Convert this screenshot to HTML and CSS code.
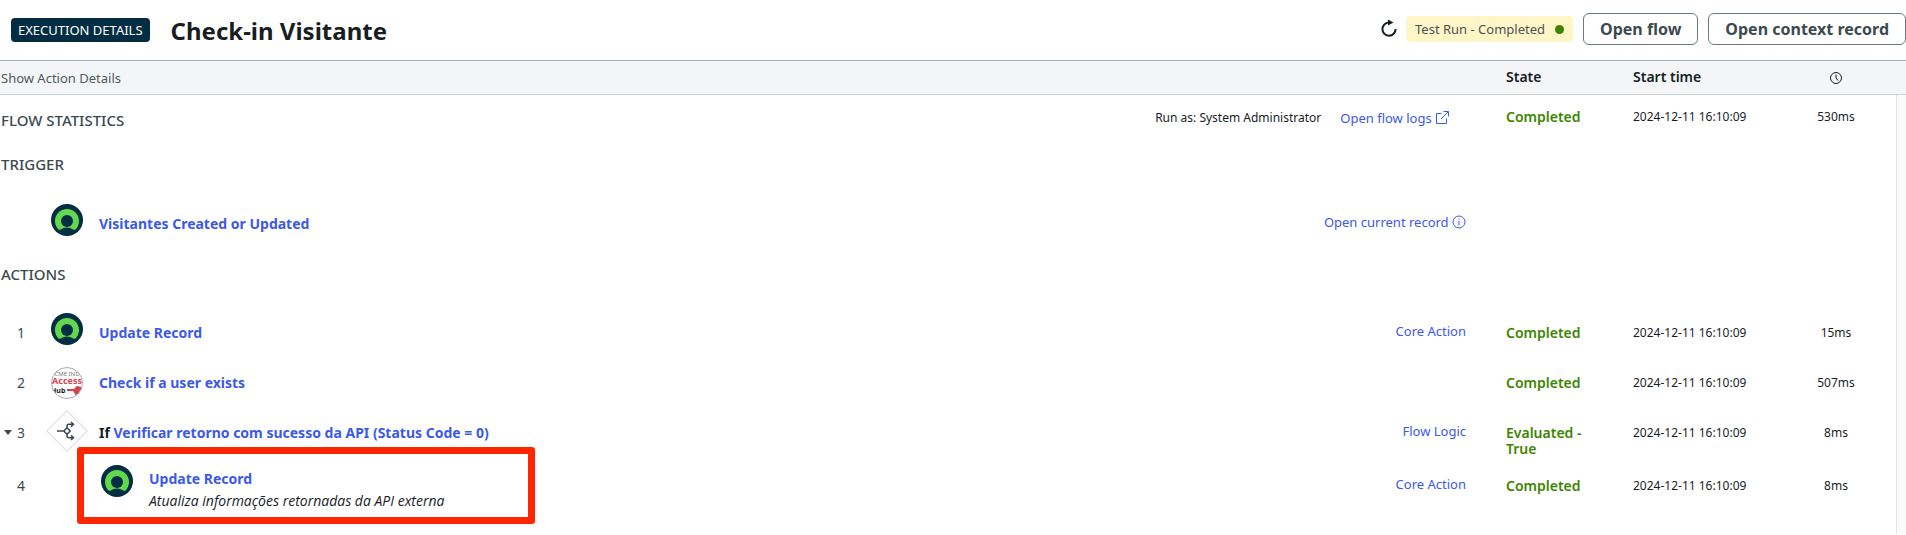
FILE: index.html
```html
<!DOCTYPE html>
<html lang="pt">
<head>
<meta charset="utf-8">
<title>Check-in Visitante</title>
<link rel="stylesheet" href="styles.css">
</head>
<body>
<svg width="0" height="0" class="defs" aria-hidden="true">
  <symbol id="record" viewBox="0 0 32 32">
    <circle cx="16" cy="16" r="16" fill="#032d42"/>
    <path d="M16 5C9.300 5 4 10.300 4 17c0 3.200 1.200 6 3.200 8.200.7.700 1.800.800 2.600.300C11.600 24.200 13.800 23.500 16 23.500s4.400.700 6.200 2c.8.500 1.900.400 2.600-.300C26.800 23 28 20.200 28 17 28 10.300 22.700 5 16 5z" fill="#62d84e"/>
    <circle cx="16" cy="17" r="6" fill="#032d42"/>
  </symbol>
</svg>
<header class="topbar">
  <span class="tag">EXECUTION DETAILS</span>
  <h1 class="title">Check-in Visitante</h1>
  <div class="tools">
    <button class="refresh" aria-label="Refresh">
      <svg width="18" height="20" viewBox="0 0 18 20"><path d="M9.500 3.500A6.600 6.600 0 1 0 15.600 10" fill="none" stroke="#181d1f" stroke-width="2"/><path d="M8 .500l5.500 3L8 6.500z" fill="#181d1f"/></svg>
    </button>
    <span class="status">Test Run - Completed <i class="dot"></i></span>
    <button class="btn">Open flow</button>
    <button class="btn">Open context record</button>
  </div>
</header>
<table class="log">
  <colgroup>
    <col class="c-num"><col><col class="c-link"><col class="c-state"><col class="c-start"><col class="c-time"><col class="c-gutter">
  </colgroup>
  <thead>
    <tr>
      <th class="toggle" colspan="3">Show Action Details</th>
      <th>State</th>
      <th>Start time</th>
      <th class="time"><svg width="14" height="14" viewBox="0 0 14 14" fill="none" stroke="#181d1f" role="img" aria-label="Duration"><circle cx="7" cy="7" r="5.500"/><path d="M7 3.500V7l2 2.500"/></svg></th>
      <th></th>
    </tr>
  </thead>
  <tbody>
    <tr class="stats">
      <td class="section" colspan="2">FLOW STATISTICS</td>
      <td class="link"><div class="run"><span class="runas">Run as: System Administrator</span>
        <a href="#">Open flow logs <svg width="14" height="14" viewBox="0 0 14 14" fill="none" stroke="currentColor"><path d="M6.500 2.500h-5v10h10v-5M6 8l7-7M8.500.500h5v5"/></svg></a></div></td>
      <td class="state">Completed</td><td>2024-12-11 16:10:09</td><td class="time">530ms</td><td class="gutter"></td>
    </tr>
    <tr class="heading"><td class="section" colspan="6">TRIGGER</td><td class="gutter"></td></tr>
    <tr class="trigger">
      <td></td>
      <td><div class="name"><svg class="icon"><use href="#record"/></svg><a class="strong" href="#">Visitantes Created or Updated</a></div></td>
      <td class="link"><a href="#">Open current record <svg width="14" height="14" viewBox="0 0 14 14" fill="none" stroke="currentColor"><circle cx="7" cy="7" r="6"/><path d="M7 6v4.500M7 3.500v1.200"/></svg></a></td>
      <td></td><td></td><td></td><td class="gutter"></td>
    </tr>
    <tr class="heading"><td class="section" colspan="6">ACTIONS</td><td class="gutter"></td></tr>
    <tr class="first">
      <td class="num">1</td>
      <td><div class="name"><svg class="icon"><use href="#record"/></svg><a class="strong" href="#">Update Record</a></div></td>
      <td class="link"><a href="#">Core Action</a></td>
      <td class="state">Completed</td><td>2024-12-11 16:10:09</td><td class="time">15ms</td><td class="gutter"></td>
    </tr>
    <tr class="action">
      <td class="num">2</td>
      <td><div class="name">
        <svg class="logo" viewBox="0 0 32 32">
          <clipPath id="disc"><circle cx="16" cy="16" r="15.500"/></clipPath>
          <circle cx="16" cy="16" r="15.500" fill="#fff"/>
          <g clip-path="url(#disc)">
            <text class="logo-top" x="16" y="9" text-anchor="middle">CME IND</text>
            <text class="logo-red" x="16" y="17" text-anchor="middle">Access</text>
            <text class="logo-dark" x="0" y="26">Hub</text>
            <path d="M16 23h8M26 20l4 1v5l-5 1-2-3.500z" stroke="#d9434e" stroke-width="2" fill="#d9434e"/>
          </g>
          <circle cx="16" cy="16" r="15.500" fill="none" stroke="#a4abb0"/>
        </svg>
        <a class="strong" href="#">Check if a user exists</a></div></td>
      <td></td>
      <td class="state">Completed</td><td>2024-12-11 16:10:09</td><td class="time">507ms</td><td class="gutter"></td>
    </tr>
    <tr class="action">
      <td class="num"><button class="caret" aria-label="Collapse"></button>3</td>
      <td><div class="name">
        <svg class="diamond" viewBox="0 0 42 42" fill="none">
          <path d="M21 .700L41.300 21 21 41.300.700 21z" stroke="#cbced0"/>
          <g stroke="#3c4a50" stroke-width="1.500"><path d="M11 21h7M21 17.800l3.200 3.200-3.200 3.200-3.200-3.200zM21 17.800v-1.500q0-2 2-2h4M21 24.200v1.500q0 2 2 2h4M25 12l2.500 2.300L25 16.600M25 25.400l2.500 2.300L25 30"/></g>
        </svg>
        <span class="strong">If <a href="#">Verificar retorno com sucesso da API (Status Code = 0)</a></span></div></td>
      <td class="link"><a href="#">Flow Logic</a></td>
      <td class="state wrap">Evaluated - True</td><td>2024-12-11 16:10:09</td><td class="time">8ms</td><td class="gutter"></td>
    </tr>
    <tr class="nested">
      <td class="num">4</td>
      <td><div class="name child"><svg class="icon"><use href="#record"/></svg>
        <div><a class="strong" href="#">Update Record</a><p class="note">Atualiza informações retornadas da API externa</p></div>
        <span class="highlight"></span></div></td>
      <td class="link"><a href="#">Core Action</a></td>
      <td class="state">Completed</td><td>2024-12-11 16:10:09</td><td class="time">8ms</td><td class="gutter"></td>
    </tr>
    <tr class="rest"><td colspan="6"></td><td class="gutter"></td></tr>
  </tbody>
</table>
</body>
</html>
```
FILE: styles.css
```css
* { box-sizing: border-box; }
body {
  margin: 0;
  background: #fff;
  color: #181d1f;
  font: 12px/16px "Noto Sans", "Open Sans", sans-serif;
}
a { color: #3c59e7; text-decoration: none; }
button { font-family: inherit; background: none; cursor: pointer; }
.defs { position: absolute; }

.topbar {
  display: flex;
  align-items: center;
  height: 61px;
  padding-left: 11px;
  border-bottom: 1px solid #a4adb3;
}
.tag {
  padding: 0 7px;
  border-radius: 4px;
  background: #032d42;
  color: #fff;
  font-size: 13px;
  line-height: 24px;
}
.title { margin: 0 0 0 21px; padding-top: 2px; font-size: 24px; line-height: 32px; }
.tools { display: flex; align-items: center; gap: 10px; margin-left: auto; padding-bottom: 2px; }
.refresh { display: flex; padding: 0; border: 0; margin-right: -2px; }
.status {
  display: flex;
  align-items: center;
  gap: 10px;
  padding: 0 9px;
  border-radius: 4px;
  background: #fff6c7;
  color: #4c5356;
  font-size: 13px;
  line-height: 26px;
}
.dot { width: 9px; height: 9px; border-radius: 50%; background: #3d8500; }
.btn {
  padding: 0 16px;
  border: 1px solid #6b7a80;
  border-radius: 6px;
  color: #3c4a50;
  font-size: 16px;
  font-weight: 700;
  line-height: 30px;
}

.log { width: 100%; table-layout: fixed; border-collapse: separate; border-spacing: 0; }
.c-num { width: 45px; }
.c-link { width: 400px; }
.c-state { width: 127px; }
.c-start { width: 143px; }
.c-time { width: 120px; }
.c-gutter { width: 10px; }
th, td { padding: 0; text-align: left; }
th {
  height: 34px;
  padding-bottom: 1px;
  border-bottom: 1px solid #cbd2d5;
  background: #f4f5f7;
  font-size: 14px;
  font-weight: 600;
}
.log .toggle { padding-left: 1px; padding-bottom: 0; color: #4f5a5f; font-size: 13px; font-weight: 400; }
.log .time { text-align: center; }
.time svg { vertical-align: middle; }
.gutter { border-left: 1px solid #e4e6e8; background: #fafafa; }
.section { padding-left: 1px; color: #3c4a50; font-size: 15px; font-weight: 500; }
.heading td { height: 44px; }
.stats td { height: 47px; padding-bottom: 4px; }
.stats .section { padding-top: 2px; padding-bottom: 0; }
.stats .link { padding-bottom: 1px; }
.run { display: flex; justify-content: flex-end; gap: 19px; padding-right: 17px; }
.runas { font-size: 12px; }
.link { padding-right: 40px; padding-bottom: 4px; text-align: right; font-size: 13px; }
.link svg { vertical-align: -2px; }
.trigger td { height: 66px; padding-top: 10px; }
.first td { height: 62px; padding-top: 12px; }
.action td { height: 50px; }
.nested td { height: 56px; }
.state { color: #3d8500; font-size: 14px; font-weight: 600; }
.wrap { padding-right: 40px; vertical-align: top; }
.action .wrap { padding-top: 17px; }
.num { position: relative; padding-left: 17px; color: #3c4a50; font-size: 14px; }
.caret {
  position: absolute;
  left: 4px;
  top: 22px;
  width: 8px;
  height: 5px;
  padding: 0;
  border: 0;
  background: #3c4a50;
  clip-path: polygon(0 0, 100% 0, 50% 100%);
}
.name { display: flex; align-items: center; gap: 16px; padding-left: 6px; }
.icon { width: 32px; height: 32px; margin-bottom: 8px; flex: none; }
.logo { width: 32px; height: 32px; flex: none; }
.diamond { width: 42px; height: 42px; margin: 0 -5px 4px; flex: none; }
.strong { font-size: 14px; font-weight: 700; line-height: 20px; }
.logo-top { font-size: 6px; fill: #777; }
.logo-red { font-size: 9px; font-weight: 700; fill: #d9434e; }
.logo-dark { font-size: 7px; font-weight: 700; fill: #181d1f; }
.child { position: relative; padding: 6px 0 0 56px; }
.child .icon { margin-bottom: 16px; }
.note { margin: 4px 0 0; font-family: "Open Sans", sans-serif; font-size: 14px; font-style: italic; line-height: 16px; }
.highlight {
  position: absolute;
  left: 32px;
  top: -12px;
  width: 458px;
  height: 77px;
  border: 7px solid #ff2600;
  border-radius: 3px;
}
.rest td { height: 20px; }
```
